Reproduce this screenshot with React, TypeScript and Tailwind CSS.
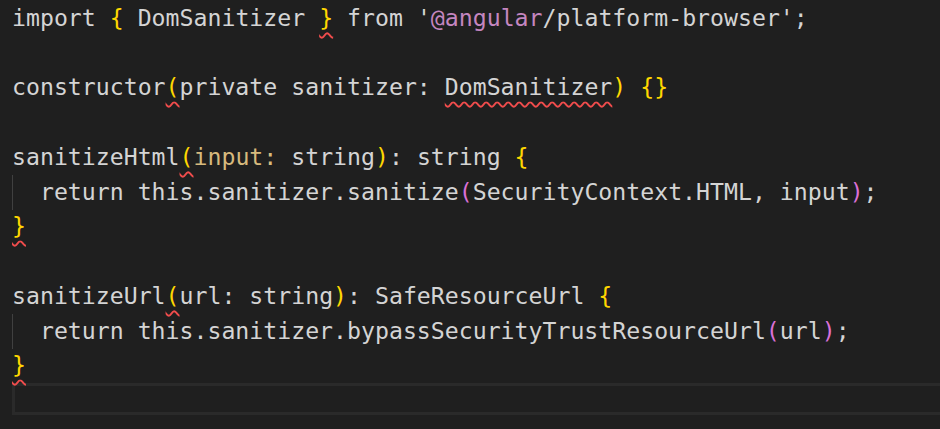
import type { ReactNode } from 'react';

const Y = ({ children, squiggle = false }: { children: ReactNode; squiggle?: boolean }) => (
  <span
    className={`text-[#ffd700] ${squiggle ? 'underline decoration-wavy decoration-[#f14c4c] decoration-[1.5px] underline-offset-[6px]' : ''}`}
  >
    {children}
  </span>
);

const P = ({ children }: { children: ReactNode }) => <span className="text-[#da70d6]">{children}</span>;

const Line = ({ children, guide = false }: { children?: ReactNode; guide?: boolean }) => (
  <div className="relative h-[34.75px] flex items-center pl-[12px]">
    {guide && <div className="absolute left-[12px] top-0 bottom-0 w-px bg-[#404040]" />}
    <span className="whitespace-pre">{children}</span>
  </div>
);

export default function App() {
  return (
    <div
      className="w-[940px] h-[429px] overflow-hidden bg-[#1f1f1f] text-[#d4d4d4] text-[23.2px] flex"
      style={{ fontFamily: '"DejaVu Sans Mono", "Liberation Mono", monospace' }}
    >
      <div className="flex-1 flex flex-col pt-px">
        <Line>
          import <Y>{'{'}</Y> DomSanitizer <Y squiggle>{'}'}</Y> from '<span className="text-[#c586c0]">@angular</span>/platform-browser';
        </Line>
        <Line />
        <Line>
          constructor<Y squiggle>(</Y>private sanitizer:{' '}
          <span className="underline decoration-wavy decoration-[#f14c4c] decoration-[1.5px] underline-offset-[6px]">DomSanitizer</span>
          <Y>)</Y>{' '}<Y>{'{}'}</Y>
        </Line>
        <Line />
        <Line>
          sanitizeHtml<Y squiggle>(</Y>
          <span className="text-[#d7ba7d]">input:</span> string<Y>)</Y>: string <Y>{'{'}</Y>
        </Line>
        <Line guide>
          {'  return this.sanitizer.sanitize'}<P>(</P>SecurityContext.HTML, input<P>)</P>;
        </Line>
        <Line>
          <Y squiggle>{'}'}</Y>
        </Line>
        <Line />
        <Line>
          sanitizeUrl<Y squiggle>(</Y>url: string<Y>)</Y>: SafeResourceUrl <Y>{'{'}</Y>
        </Line>
        <Line guide>
          {'  return this.sanitizer.bypassSecurityTrustResourceUrl'}<P>(</P>url<P>)</P>;
        </Line>
        <Line>
          <Y squiggle>{'}'}</Y>
        </Line>
        <div className="ml-[12px] h-[32px] border-y-[3px] border-l-[3px] border-[#2a2a2a]" />
      </div>
    </div>
  );
}
